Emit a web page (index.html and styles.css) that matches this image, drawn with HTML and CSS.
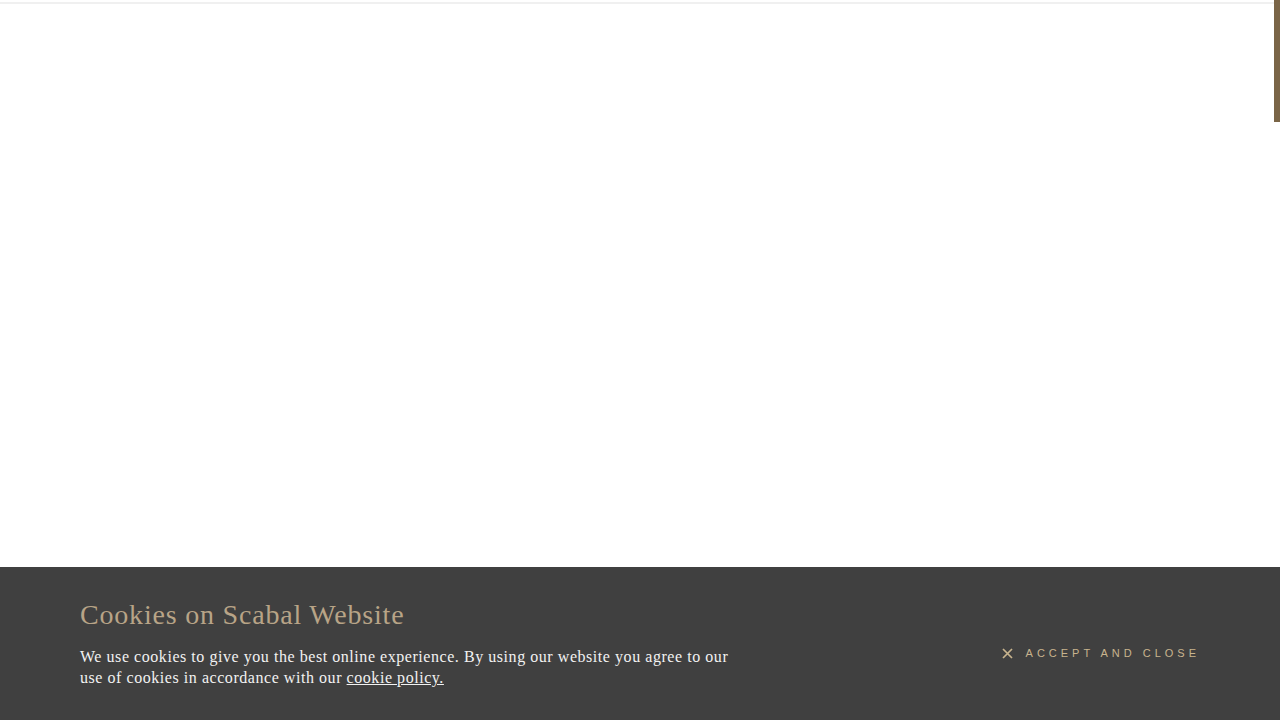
FILE: index.html
```html
<!DOCTYPE html>
<html lang="en">
<head>
<meta charset="utf-8">
<title>Scabal</title>
<link rel="stylesheet" href="styles.css">
</head>
<body>
<div class="topline"></div>
<div class="thumb"></div>
<div class="cookie">
  <div class="cookie-text">
    <h2 class="cookie-title">Cookies on Scabal Website</h2>
    <p class="cookie-body">We use cookies to give you the best online experience. By using our website you agree to our use of cookies in accordance with our <a href="#" class="cookie-link">cookie policy.</a></p>
  </div>
  <a href="#" class="accept">
    <svg class="accept-x" width="11" height="11" viewBox="0 0 11 11"><path d="M1 1L10 10M10 1L1 10" stroke="#c8b48e" stroke-width="1.7" fill="none"/></svg>
    <span class="accept-label">ACCEPT AND CLOSE</span>
  </a>
</div>
</body>
</html>
```
FILE: styles.css
```css
html, body {
  margin: 0;
  padding: 0;
  height: 100%;
  background: #ffffff;
  overflow: hidden;
}
.topline {
  margin-top: 2px;
  height: 2px;
  background: #f0f0f0;
}
.thumb {
  position: fixed;
  top: 0;
  right: 0;
  width: 6px;
  height: 122px;
  background: #7a6547;
}
.cookie {
  position: fixed;
  left: 0;
  right: 0;
  bottom: 0;
  height: 153px;
  background: #404040;
  box-sizing: border-box;
  padding: 30px 84px 0 80px;
  display: flex;
  justify-content: space-between;
  align-items: flex-start;
}
.cookie-title {
  margin: 0;
  font-family: "Liberation Serif", serif;
  font-weight: normal;
  font-size: 28px;
  line-height: 36px;
  color: #b8a487;
  letter-spacing: 0.8px;
}
.cookie-body {
  margin: 13px 0 0;
  width: 655px;
  font-family: "Liberation Serif", serif;
  font-size: 16px;
  line-height: 21px;
  color: #f2f2f2;
  letter-spacing: 0.55px;
}
.cookie-link {
  color: #f2f2f2;
  text-decoration: underline;
}
.accept {
  margin-top: 50px;
  display: flex;
  align-items: center;
  gap: 13px;
  text-decoration: none;
}
.accept-x {
  display: block;
}
.accept-label {
  font-family: "Liberation Sans", sans-serif;
  font-size: 11px;
  letter-spacing: 4px;
  color: #c8b48e;
  margin-right: -4px;
}
```
